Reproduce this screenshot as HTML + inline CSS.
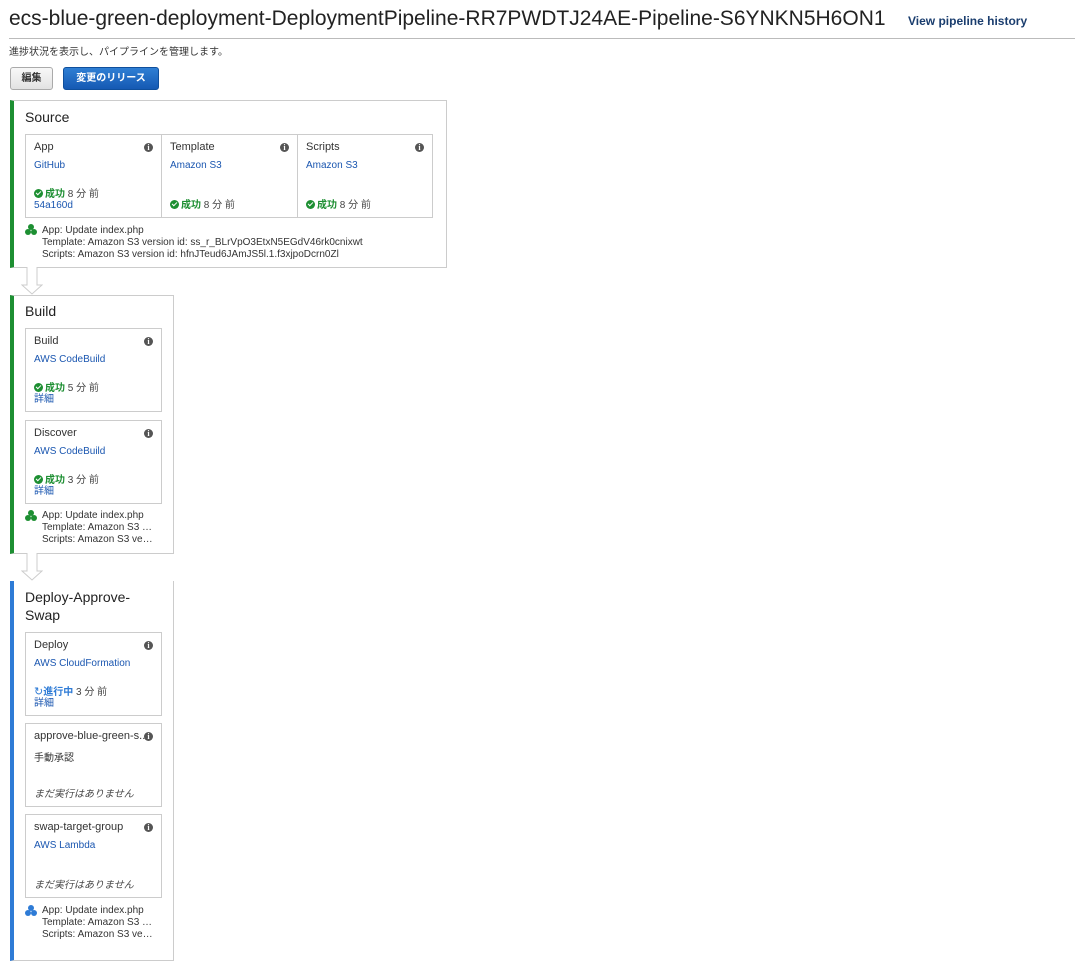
<!DOCTYPE html>
<html><head><meta charset="utf-8"><style>
*{box-sizing:border-box;margin:0;padding:0}
body{width:1075px;height:946px;overflow:hidden;background:#fff;font-family:"Liberation Sans","Noto Sans CJK JP",sans-serif;color:#333;position:relative}
.a{position:absolute;white-space:nowrap}
.stage{position:absolute;border:1px solid #ccc;background:#fff}
.cell{position:absolute;border:1px solid #ccc;width:137px;height:84px;font-size:11px}
.cell .n{position:absolute;left:8px;top:6px;color:#333}
.cell .p{position:absolute;left:8px;top:25px;color:#1a56b0;font-size:10px}
.cell .s{position:absolute;left:8px;top:54px;font-size:10px;color:#444;line-height:11px}
.cell .s b{color:#1d8f32}
.cell .i{position:absolute;right:8px;top:8px;width:9px;height:9px;border-radius:50%;background:#555;color:#fff;font-size:8px;line-height:9px;text-align:center;font-weight:bold;font-family:"Liberation Serif",serif}
.ok{display:inline-block;width:9px;height:9px;border-radius:50%;background:#1d8f32;vertical-align:-1px;margin-right:2px;position:relative}
.ok:after{content:"";position:absolute;left:2px;top:2px;width:4px;height:2px;border-left:1.5px solid #fff;border-bottom:1.5px solid #fff;transform:rotate(-45deg)}
.lk{color:#1a56b0}
.ft{position:absolute;font-size:10px;line-height:12px;color:#333}
.dots{position:absolute;width:12px;height:12px}
.dots i{position:absolute;width:6px;height:6px;border-radius:50%}
.arrow{position:absolute;width:22px;height:28px}
.h{position:absolute;left:11px;font-size:14px;color:#222}
</style></head><body>
<div class="a" style="left:9px;top:7px;font-size:21px;color:#222">ecs-blue-green-deployment-DeploymentPipeline-RR7PWDTJ24AE-Pipeline-S6YNKN5H6ON1</div>
<div class="a" style="left:908px;top:14px;font-size:12px;font-weight:bold;color:#1a3d6e">View pipeline history</div>
<div class="a" style="left:9px;top:38px;width:1066px;border-top:1px solid #bbb"></div>
<div class="a" style="left:9px;top:43px;font-size:10px;color:#333">進捗状況を表示し、パイプラインを管理します。</div>
<div class="a" style="left:10px;top:67px;width:43px;height:23px;border:1px solid #aaa;border-radius:3px;background:linear-gradient(#f8f8f8,#e2e2e2);font-size:10px;font-weight:bold;text-align:center;line-height:21px;color:#333">編集</div>
<div class="a" style="left:63px;top:67px;width:96px;height:23px;border:1px solid #0f4f9c;border-radius:3px;background:linear-gradient(#2f7fd4,#1559b3);font-size:10px;font-weight:bold;text-align:center;line-height:21px;color:#fff">変更のリリース</div>

<!-- Source -->
<div class="stage" style="left:10px;top:100px;width:437px;height:168px;border-left:4px solid #1d8f32">
<div class="h" style="top:8px">Source</div>
</div>
<div class="cell" style="left:25px;top:134px;width:137px"><div class="n">App</div><div class="i">i</div><div class="p">GitHub</div><div class="s"><span class="ok"></span><b>成功</b> 8 分 前<br><span class="lk">54a160d</span></div></div>
<div class="cell" style="left:161px;top:134px;width:137px"><div class="n">Template</div><div class="i">i</div><div class="p">Amazon S3</div><div class="s" style="top:65px"><span class="ok"></span><b>成功</b> 8 分 前</div></div>
<div class="cell" style="left:297px;top:134px;width:136px"><div class="n">Scripts</div><div class="i">i</div><div class="p">Amazon S3</div><div class="s" style="top:65px"><span class="ok"></span><b>成功</b> 8 分 前</div></div>
<div class="dots" style="left:25px;top:224px"><i style="left:3px;top:0;background:#1d8f32"></i><i style="left:0;top:5px;background:#1d8f32"></i><i style="left:6px;top:5px;background:#1d8f32"></i></div>
<div class="ft" style="left:42px;top:225px">App: Update index.php<br>Template: Amazon S3 version id: ss_r_BLrVpO3EtxN5EGdV46rk0cnixwt<br>Scripts: Amazon S3 version id: hfnJTeud6JAmJS5l.1.f3xjpoDcrn0Zl</div>
<svg class="arrow" style="left:21px;top:267px" viewBox="0 0 22 28"><path d="M6 0V18H1L11 27L21 18H16V0" fill="#fff" stroke="#ccc"/></svg>

<!-- Build -->
<div class="stage" style="left:10px;top:295px;width:164px;height:259px;border-left:4px solid #1d8f32">
<div class="h" style="top:7px">Build</div>
</div>
<div class="cell" style="left:25px;top:328px"><div class="n">Build</div><div class="i">i</div><div class="p">AWS CodeBuild</div><div class="s"><span class="ok"></span><b>成功</b> 5 分 前<br><span class="lk">詳細</span></div></div>
<div class="cell" style="left:25px;top:420px"><div class="n">Discover</div><div class="i">i</div><div class="p">AWS CodeBuild</div><div class="s"><span class="ok"></span><b>成功</b> 3 分 前<br><span class="lk">詳細</span></div></div>
<div class="dots" style="left:25px;top:510px"><i style="left:3px;top:0;background:#1d8f32"></i><i style="left:0;top:5px;background:#1d8f32"></i><i style="left:6px;top:5px;background:#1d8f32"></i></div>
<div class="ft" style="left:42px;top:510px">App: Update index.php<br>Template: Amazon S3 …<br>Scripts: Amazon S3 ve…</div>
<svg class="arrow" style="left:21px;top:553px" viewBox="0 0 22 28"><path d="M6 0V18H1L11 27L21 18H16V0" fill="#fff" stroke="#ccc"/></svg>

<!-- Deploy -->
<div class="stage" style="left:10px;top:581px;width:164px;height:380px;border-left:4px solid #2e7bd6;border-top:none">
<div class="h" style="top:7px;line-height:18px">Deploy-Approve-<br>Swap</div>
</div>
<div class="cell" style="left:25px;top:632px"><div class="n">Deploy</div><div class="i">i</div><div class="p">AWS CloudFormation</div><div class="s"><span style="color:#2e7bd6;font-size:11px">↻</span><span style="color:#2e7bd6;font-weight:bold">進行中</span> 3 分 前<br><span class="lk">詳細</span></div></div>
<div class="cell" style="left:25px;top:723px"><div class="n">approve-blue-green-s..</div><div class="i">i</div><div class="p" style="color:#333">手動承認</div><div class="s" style="top:65px;font-style:italic">まだ実行はありません</div></div>
<div class="cell" style="left:25px;top:814px"><div class="n">swap-target-group</div><div class="i">i</div><div class="p">AWS Lambda</div><div class="s" style="top:65px;font-style:italic">まだ実行はありません</div></div>
<div class="dots" style="left:25px;top:905px"><i style="left:3px;top:0;background:#2e7bd6"></i><i style="left:0;top:5px;background:#2e7bd6"></i><i style="left:6px;top:5px;background:#2e7bd6"></i></div>
<div class="ft" style="left:42px;top:905px">App: Update index.php<br>Template: Amazon S3 …<br>Scripts: Amazon S3 ve…</div>
</body></html>
